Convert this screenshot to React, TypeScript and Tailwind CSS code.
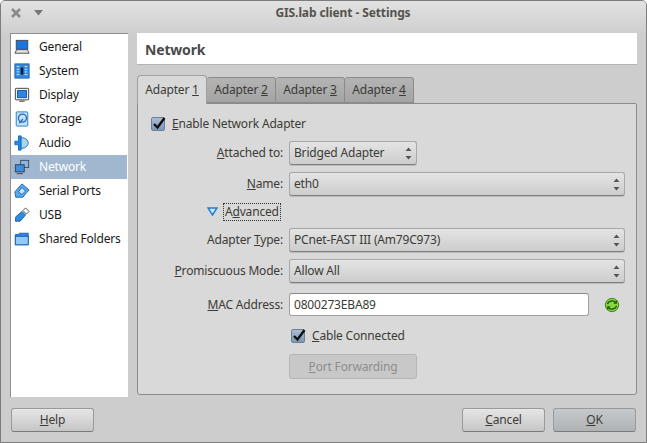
import React from "react";

const Updown = () => (
  <svg width="7" height="13" viewBox="0 0 7 13" className="shrink-0">
    <path d="M3.5 0.5 L6.5 4 H0.5 Z" fill="#55534f" />
    <path d="M3.5 12.5 L6.5 9 H0.5 Z" fill="#55534f" />
  </svg>
);

const Check = () => (
  <span className="relative block w-[14px] h-[14px] rounded-[2px] border border-[#6d7f94] bg-gradient-to-b from-[#a9bed6] to-[#7d97b5] shrink-0">
    <svg width="16" height="16" viewBox="0 0 16 16" className="absolute left-[-1px] top-[-3px]">
      <path d="M3 9 L6.5 12.5 L13.5 3" fill="none" stroke="#101010" strokeWidth="2.4" />
    </svg>
  </span>
);

const Select = ({ children, w }: { children: React.ReactNode; w?: string }) => (
  <div className={`${w ?? "flex-1"} h-6 flex items-center justify-between pl-[4px] pr-[4px] rounded-[3px] border border-[#a8a8a8] border-b-[#808080] bg-gradient-to-b from-[#e4e4e4] to-[#cdcdcd] shadow-[0_1px_0_#bbbbbb]`}>
    <span>{children}</span>
    <Updown />
  </div>
);

const Row = ({ label, children, mt }: { label: React.ReactNode; children: React.ReactNode; mt: string }) => (
  <div className={`flex items-center gap-[6px] ${mt}`}>
    <div className="w-[145px] text-right">{label}</div>
    {children}
  </div>
);

const Button = ({ children, className }: { children: React.ReactNode; className?: string }) => (
  <div className={`h-6 flex items-center justify-center rounded-[3px] border border-[#9a9a9a] border-b-[#7a7a7a] ${className ?? "bg-gradient-to-b from-[#e6e6e6] to-[#c6c6c6]"} w-[83px]`}>
    {children}
  </div>
);

const Ic = ({ children }: { children: React.ReactNode }) => (
  <svg width="16" height="16" viewBox="0 0 18 18" className="shrink-0">{children}</svg>
);

const icons: Record<string, React.ReactNode> = {
  General: (
    <Ic>
      <rect x="2.5" y="1.5" width="13" height="10" fill="#1c74e0" stroke="#444" />
      <path d="M1 16 L3 12 H15 L17 16 Z" fill="#e4e4e4" stroke="#444" />
    </Ic>
  ),
  System: (
    <Ic>
      <rect x="1" y="1" width="16" height="16" fill="#2f8ae6" stroke="#2a5f9e" />
      <path d="M3 4h3M3 7h3M3 10h3M3 13h3M12 4h3M12 7h3M12 10h3M12 13h3" stroke="#dff0ff" />
      <rect x="7.5" y="5" width="3" height="8" fill="#1b1b1b" />
    </Ic>
  ),
  Display: (
    <Ic>
      <rect x="1.5" y="1.5" width="15" height="13" rx="1" fill="#eef4fb" stroke="#333" />
      <rect x="4" y="4" width="10" height="8" fill="#2f86e2" stroke="#1a4f8e" />
      <path d="M6 16h6" stroke="#333" />
    </Ic>
  ),
  Storage: (
    <Ic>
      <rect x="2.5" y="1" width="13" height="16" rx="1" fill="#c8e2fa" stroke="#1f6fc4" />
      <circle cx="9.5" cy="8" r="4.5" fill="none" stroke="#1f6fc4" strokeWidth="1.5" />
      <path d="M6 14 L10 9" stroke="#1f6fc4" strokeWidth="1.5" />
    </Ic>
  ),
  Audio: (
    <Ic>
      <path d="M1 7 L5 7 L5 1 L8 1 L8 17 L5 17 L5 11 L1 11 Z" fill="#1f8ae8" stroke="#1762b0" />
      <path d="M8 3 C15 3 16 8 16 9 C16 11 14 15 8 15 Z" fill="#a8d4f7" stroke="#1762b0" />
    </Ic>
  ),
  Network: (
    <Ic>
      <rect x="7.5" y="1.5" width="9" height="8" fill="#8fb6dd" stroke="#3b4a5c" />
      <rect x="1.5" y="6.5" width="10" height="8" fill="#3d8fe0" stroke="#2f3a48" />
      <path d="M3 16.5h7" stroke="#2f3a48" />
    </Ic>
  ),
  "Serial Ports": (
    <Ic>
      <path d="M1 10 L7 3 L9 1 L17 8 L14 11 L10 16 L2 16 Z" fill="#5aa8ec" stroke="#1a5ea8" />
      <path d="M5 10 L9 5 L13 9 L9 13 Z" fill="#c8e4fb" stroke="#1a5ea8" />
    </Ic>
  ),
  USB: (
    <Ic>
      <path d="M1.5 16 L2 11 L9 5 L13 9 L7 16 Z" fill="#2f8ae6" stroke="#1a5ea8" />
      <path d="M10 4 L13 1 L17 5 L14 8 Z" fill="#fff" stroke="#444" />
    </Ic>
  ),
  "Shared Folders": (
    <Ic>
      <path d="M1.5 4 V15.5 H16 V2.5 H6 L4.5 4 Z" fill="#2a86e6" stroke="#1a5ea8" />
      <rect x="1.5" y="6" width="14.5" height="9.5" fill="#8fcbf7" stroke="#1a5ea8" />
    </Ic>
  ),
};

const items = ["General", "System", "Display", "Storage", "Audio", "Network", "Serial Ports", "USB", "Shared Folders"];
const tabs = ["1", "2", "3", "4"];

export default function App() {
  return (
    <div className="w-[647px] h-[443px] flex flex-col overflow-hidden rounded-t-[5px] border border-[#7d7d7d] bg-[#cdcdcd] text-[12px] tracking-[-0.18px] text-[#3c3b37] font-['Noto_Sans',sans-serif] leading-none">
      <div className="h-8 shrink-0 flex items-start pt-[4px] pl-[9px] bg-gradient-to-b from-[#e2e2e2] to-[#cfcfcf]">
        <svg width="12" height="12" viewBox="0 0 12 12" className="mt-[2px]">
          <path d="M2 2 L10 10 M10 2 L2 10" stroke="#8a8a8a" strokeWidth="2.6" />
        </svg>
        <svg width="9" height="6" viewBox="0 0 9 6" className="ml-[12px] mt-[5px]">
          <path d="M0 0 H9 L4.5 5.5 Z" fill="#777" />
        </svg>
        <div className="flex-1 text-center font-bold text-[#55534e] pr-[3px] pt-[2px] tracking-[-0.1px]">GIS.lab client - Settings</div>
      </div>

      <div className="flex-1 flex gap-[9px] pl-[9px] pr-[9px] min-h-0">
        <div className="w-[118px] h-[364px] pt-px bg-white border-l border-t border-[#8f8f8f]">
          {items.map((k) => (
            <div key={k} className={`h-6 flex items-center whitespace-nowrap pl-[3px] gap-[9px] ${k === "Network" ? "bg-[#a1b7cf] text-white mr-px" : "text-[#1a1a1a]"}`}>
              {icons[k]}
              <span>{k}</span>
            </div>
          ))}
        </div>

        <div className="flex-1 flex flex-col">
          <div className="h-8 shrink-0 flex items-center pl-2 pt-[2px] bg-white border-b border-[#b5b5b5] text-[14px] font-bold text-[#4a4a4a]">Network</div>
          <div className="flex h-[28px] mt-[10px] relative z-10 items-end">
            {tabs.map((n, i) => (
              <div
                key={n}
                className={
                  i === 0
                    ? "h-[29px] mb-[-1px] w-[70px] flex items-center justify-center rounded-t-[4px] border border-b-0 border-[#a0a0a0] bg-[#d9d9d9] pb-px"
                    : "h-[26px] w-[69px] flex items-center justify-center rounded-t-[3px] border border-l-0 border-[#8b8b8b] bg-gradient-to-b from-[#b4b4b4] to-[#a4a4a4]"
                }
              >
                <span>
                  Adapter <u>{n}</u>
                </span>
              </div>
            ))}
          </div>
          <div className="h-[292px] shrink-0 rounded-b-[3px] rounded-tr-[2px] border border-[#8b8b8b] bg-[#d9d9d9] pr-[11px]">
            <div className="flex items-center gap-[7px] pl-[13px] mt-[13px]">
              <Check />
              <span>
                <u>E</u>nable Network Adapter
              </span>
            </div>
            <Row mt="mt-[10px]" label={<span><u>A</u>ttached to:</span>}>
              <Select w="w-[128px]">Bridged Adapter</Select>
            </Row>
            <Row mt="mt-[7px]" label={<span><u>N</u>ame:</span>}>
              <Select>eth0</Select>
            </Row>
            <div className="flex items-center mt-[7px] pl-[69px] gap-[5px] h-[17px]">
              <svg width="11" height="9" viewBox="0 0 11 9">
                <path d="M1 1 H10 L5.5 8 Z" fill="#cfe8fb" stroke="#1f7fd6" strokeWidth="1.5" />
              </svg>
              <span className="border border-dotted border-[#333] px-px py-[2px]">
                A<u>d</u>vanced
              </span>
            </div>
            <Row mt="mt-[8px]" label={<span>Adapter <u>T</u>ype:</span>}>
              <Select>PCnet-FAST III (Am79C973)</Select>
            </Row>
            <Row mt="mt-[7px]" label={<span><u>P</u>romiscuous Mode:</span>}>
              <Select>Allow All</Select>
            </Row>
            <Row mt="mt-[10px]" label={<span><u>M</u>AC Address:</span>}>
              <div className="w-[300px] h-[23px] flex items-center pl-[4px] rounded-[3px] border border-[#a0a0a0] border-t-[#8a8a8a] bg-white">0800273EBA89</div>
              <svg width="16" height="16" viewBox="0 0 18 18" className="ml-[9px] shrink-0">
                <circle cx="9" cy="9" r="7.5" fill="#8ad63f" stroke="#2f7a12" />
                <path d="M4 8 C5 4 11 3 13.5 6.5 M14 10 C13 14 7 15 4.5 11.5" fill="none" stroke="#1f5f0a" strokeWidth="1.6" />
                <path d="M14.5 3.5 V7.5 H10.5 Z M3.5 14.5 V10.5 H7.5 Z" fill="#1f5f0a" />
              </svg>
            </Row>
            <div className="flex items-center gap-[7px] pl-[153px] mt-[13px]">
              <Check />
              <span>
                <u>C</u>able Connected
              </span>
            </div>
            <div className="pl-[151px] mt-[11px]">
              <div className="w-[128px] h-[25px] flex items-center justify-center rounded-[3px] border border-[#b5b5b5] bg-[#c8c8c8] text-[#8e8e8e]">
                <span>
                  <u>P</u>ort Forwarding
                </span>
              </div>
            </div>
          </div>
        </div>
      </div>

      <div className="flex shrink-0 items-center pl-[10px] pr-[10px] mb-[10px]">
        <Button>
          <span>
            <u>H</u>elp
          </span>
        </Button>
        <div className="flex-1" />
        <Button className="bg-gradient-to-b from-[#e6e6e6] to-[#c6c6c6] mr-[8px]">
          <span>
            <u>C</u>ancel
          </span>
        </Button>
        <Button className="bg-gradient-to-b from-[#c6c9cc] to-[#b0b3b6]">
          <span>
            <u>O</u>K
          </span>
        </Button>
      </div>
    </div>
  );
}
